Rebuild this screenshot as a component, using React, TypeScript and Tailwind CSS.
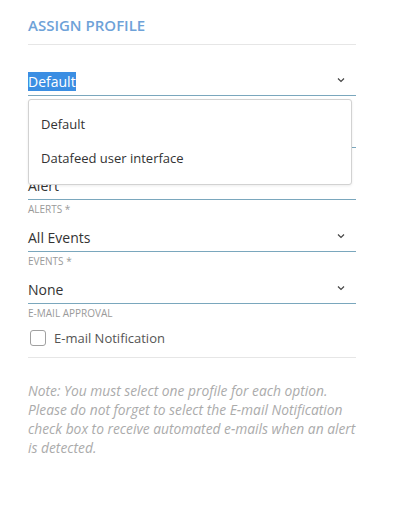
const Chevron = () => (
  <svg width="8" height="6" viewBox="0 0 8 6" className="mb-[12px]">
    <path d="M1 1.5 L4 4.5 L7 1.5" fill="none" stroke="#444" strokeWidth="1.2" />
  </svg>
);

interface FieldProps {
  value: string;
  label: string;
  select?: boolean;
  highlight?: boolean;
}

const Field = ({ value, label, select, highlight }: FieldProps) => (
  <div className="mb-[11px]">
    <div className="h-[26px] flex items-end justify-between border-b border-[#7aa7bd] pr-[11px]">
      <span
        className={`text-[14px] leading-[19px] mb-[4px] ${
          highlight ? "bg-[#3b8ee3] text-white" : "text-[#333]"
        }`}
      >
        {value}
      </span>
      {select && <Chevron />}
    </div>
    <div className="mt-[3px] text-[10px] leading-[12px] uppercase text-[#9a9a9a]">
      {label}
    </div>
  </div>
);

export default function App() {
  return (
    <div
      className="w-[407px] h-[520px] bg-white pt-[14px] pl-[28px]"
      style={{ fontFamily: '"Open Sans", "Liberation Sans", sans-serif' }}
    >
      <div className="w-[328px]">
        <h2 className="text-[15px] leading-[22px] font-semibold text-[#6ea2d8] pb-[8px] border-b border-[#e6e6e6]">
          ASSIGN PROFILE
        </h2>

        <div className="relative mt-[25px]">
          <Field value="Default" label="Profile *" select highlight />
          <Field value="Default" label="Datafeed *" select />
          <Field value="Alert" label="Alerts *" />
          <Field value="All Events" label="Events *" select />
          <Field value="None" label="E-mail Approval" select />

          {/* open dropdown menu over the next field */}
          <div className="absolute left-0 top-[29px] w-[324px] bg-white border border-[#d2d2d2] rounded-[3px] shadow-[0_1px_3px_rgba(0,0,0,0.08)] pt-[8px] pb-[8px]">
            <div className="h-[34px] flex items-center pl-[12px] text-[13px] text-[#333]">
              Default
            </div>
            <div className="h-[34px] flex items-center pl-[12px] text-[13px] text-[#333]">
              Datafeed user interface
            </div>
          </div>
        </div>

        <div className="flex items-center -mt-[1px] pb-[10px] border-b border-[#e6e6e6]">
          <div className="ml-[2px] w-[16px] h-[16px] rounded-[3px] border border-[#a0a0a0]" />
          <span className="ml-[8px] text-[13px] leading-[18px] text-[#555]">
            E-mail Notification
          </span>
        </div>

        <p className="mt-[23px] w-[340px] text-[13.8px] leading-[19px] italic text-[#ababab]">
          Note: You must select one profile for each option.
          <br />
          Please do not forget to select the E-mail Notification
          <br />
          check box to receive automated e-mails when an alert
          <br />
          is detected.
        </p>
      </div>
    </div>
  );
}
